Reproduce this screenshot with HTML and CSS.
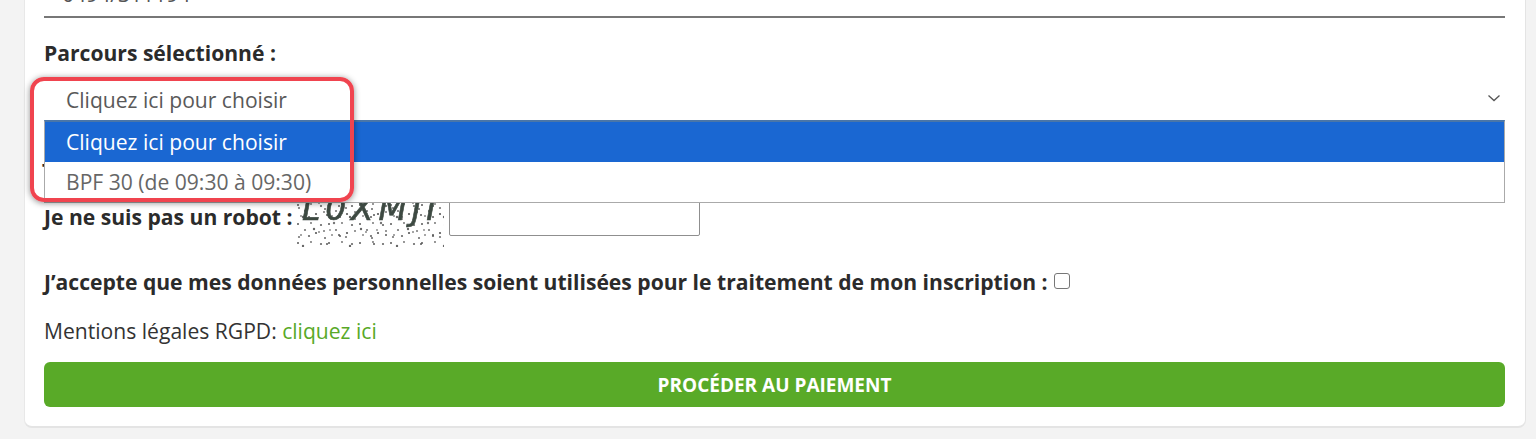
FILE: index.html
```html
<!DOCTYPE html>
<html lang="fr">
<head>
<meta charset="utf-8">
<title>Inscription</title>
<link rel="stylesheet" href="styles.css">
</head>
<body>
<main class="card">
  <div class="phone">0494/311194</div>
  <hr class="rule">
  <div class="label">Parcours sélectionné :</div>
  <div class="select-wrap">
    <div class="select">
      <span>Cliquez ici pour choisir</span>
      <svg class="chev" width="14" height="8" viewBox="0 0 14 8"><path d="M1.5 1.5 7 6.5l5.5-5" fill="none" stroke="#555" stroke-width="1.3"/></svg>
    </div>
    <div class="menu">
      <div class="opt active">Cliquez ici pour choisir</div>
      <div class="opt">BPF 30 (de 09:30 à 09:30)</div>
    </div>
    <div class="annot"></div>
  </div>
  <div class="hidden-row">Tarif :</div>
  <div class="robot">
    <span class="label">Je ne suis pas un robot :</span>
    <svg class="captcha" width="148" height="64" viewBox="0 0 148 64">
      <defs>
        <pattern id="noise" width="31" height="19" patternUnits="userSpaceOnUse">
          <circle cx="2" cy="3" r="1" fill="#555"/><circle cx="9" cy="9" r="1.1" fill="#777"/>
          <circle cx="15" cy="2" r=".9" fill="#666"/><circle cx="20" cy="12" r="1.1" fill="#555"/>
          <circle cx="5" cy="14" r="1" fill="#888"/><circle cx="13" cy="15" r="1.1" fill="#666"/>
          <circle cx="25" cy="4" r="1.1" fill="#666"/><circle cx="28" cy="10" r="1" fill="#777"/>
        </pattern>
        <pattern id="noise2" width="47" height="29" patternUnits="userSpaceOnUse">
          <circle cx="7" cy="5" r="1.2" fill="#666"/><circle cx="12" cy="7" r="1" fill="#777"/>
          <circle cx="31" cy="3" r="1" fill="#555"/><circle cx="38" cy="11" r="1.2" fill="#777"/>
          <circle cx="18" cy="17" r="1.2" fill="#666"/><circle cx="23" cy="20" r="1" fill="#888"/>
          <circle cx="43" cy="23" r="1" fill="#555"/><circle cx="3" cy="25" r="1.1" fill="#777"/>
          <circle cx="29" cy="26" r="1" fill="#666"/><circle cx="34" cy="18" r=".9" fill="#888"/>
        </pattern>
        <filter id="soft"><feGaussianBlur stdDeviation=".5"/></filter>
      </defs>
      <rect width="148" height="64" fill="#fff"/>
      <g filter="url(#soft)">
        <rect y="20" width="148" height="44" fill="url(#noise)"/>
        <rect y="20" width="148" height="44" fill="url(#noise2)"/>
        <text x="6" y="37" class="captcha-text" textLength="134">L0XMJI</text>
      </g>
    </svg>
    <span class="field"></span>
  </div>
  <div class="consent">
    <span class="label">J’accepte que mes données personnelles soient utilisées pour le traitement de mon inscription :</span>
    <span class="check"></span>
  </div>
  <p class="legal">Mentions légales RGPD: <a href="#">cliquez ici</a></p>
  <button class="pay">PROCÉDER AU PAIEMENT</button>
</main>
</body>
</html>
```
FILE: styles.css
```css
* { box-sizing: border-box; }
html, body { margin: 0; height: 439px; overflow: hidden; }
body {
  background: #f3f3f3;
  font-family: "Open Sans", sans-serif;
  font-size: 21.1px;
  color: #333;
}
.card {
  width: 1502px;
  height: 448px;
  margin: -20px 0 0 24px;
  padding: 0 20px 0 19px;
  background: #fff;
  border-radius: 0 0 8px 8px;
  border-right: 1px solid #e4e4e4;
  border-bottom: 2px solid #e4e4e4;
  border-left: 1px solid #e8e8e8;
  display: flex;
  flex-direction: column;
}
.phone {
  height: 36px;
  padding-left: 18px;
  line-height: 28px;
  color: #555;
}
.rule { width: 100%; height: 2px; margin: 0; border: 0; background: #777; flex: none; }
.label { font-weight: 700; color: #2b2b2b; line-height: 28px; }
.card > .label { margin-top: 21px; }
.select-wrap { position: relative; height: 42px; margin-top: 12px; flex: none; }
.select {
  display: flex;
  align-items: center;
  justify-content: space-between;
  height: 42px;
  padding: 0 4px 2px 22px;
  color: #595959;
}
.chev { display: block; margin-bottom: 2px; }
.menu {
  position: absolute;
  z-index: 2;
  top: 41px;
  left: 0;
  right: 0;
  background: #fff;
  border: 1px solid #aaa;
  border-top: 2px solid #4a76a8;
}
.opt { height: 40px; line-height: 40px; padding-left: 21px; color: #666; }
.opt.active { background: #1a67d2; color: #fff; }
.annot {
  position: absolute;
  z-index: 3;
  top: -2px;
  left: -14px;
  width: 324px;
  height: 125px;
  border: 4px solid #f0444f;
  border-radius: 14px;
  box-shadow: 0 1px 6px rgba(0,0,0,.45);
  pointer-events: none;
}
.hidden-row {
  height: 0;
  margin: 36px 0 0 -2px;
  font-weight: 700;
  line-height: 28px;
  color: #2b2b2b;
}
.robot { display: flex; align-items: flex-start; margin-top: 26px; }
.robot .label { margin-top: 20px; }
.captcha { display: block; margin-left: 4px; flex: none; }
.captcha-text {
  font-family: "DejaVu Sans", sans-serif;
  font-size: 33px;
  font-style: italic;
  font-weight: 400;
  stroke: #3d4a42;
  stroke-width: .6;
  fill: #3d4a42;
}
.field {
  width: 251px;
  height: 35px;
  margin: 18px 0 0 5px;
  border: 1px solid #8f8f8f;
  border-radius: 2px;
  background: #fff;
}
.consent { display: flex; align-items: flex-start; margin-top: 21px; }
.check {
  width: 16px;
  height: 16px;
  margin: 5px 0 0 6px;
  border: 1px solid #777;
  border-radius: 3px;
  background: #fff;
}
.legal { margin: 21px 0 0; line-height: 28px; color: #333; }
.legal a { color: #58a928; text-decoration: none; }
.pay {
  height: 45px;
  margin-top: 17px;
  width: 100%;
  flex: none;
  border: 0;
  border-radius: 6px;
  background: #59aa28;
  color: #fff;
  font: 700 19px "Open Sans", sans-serif;
}
```
